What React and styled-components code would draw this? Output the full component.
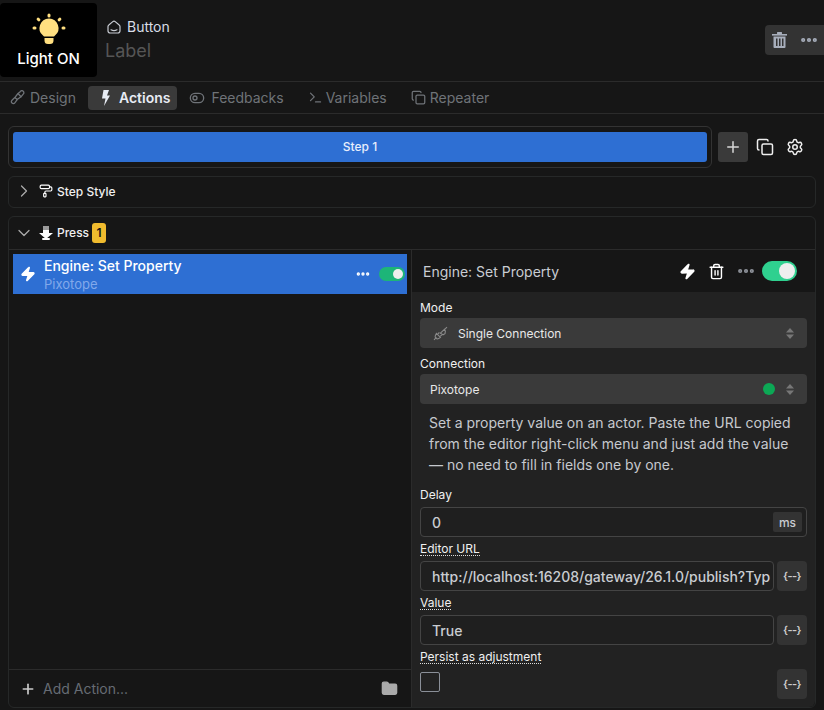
import styled, { createGlobalStyle } from 'styled-components';
import {
  ChevronDown,
  ChevronRight,
  Copy,
  Ellipsis,
  Folder,
  PaintRoller,
  Plus,
  Settings,
  Terminal,
  ToggleLeft,
  Trash2,
  Zap,
} from 'lucide-react';

const GlobalStyle = createGlobalStyle`
  html, body {
    margin: 0;
    background: #161616;
  }
  * {
    box-sizing: border-box;
  }
`;

const Page = styled.div`
  width: 824px;
  height: 710px;
  overflow: hidden;
  background: #161616;
  color: #e8e8e8;
  font-family: Inter, 'Liberation Sans', sans-serif;
  font-size: 12px;
`;

const Header = styled.div`
  height: 82px;
  padding-top: 3px;
  display: flex;
  border-bottom: 1px solid #2b2b2b;
`;

const Preview = styled.div`
  width: 97px;
  height: 74px;
  background: #000;
  border-radius: 4px;
  display: flex;
  flex-direction: column;
  align-items: center;
  padding-top: 10px;
  color: #fff;
  font-size: 15px;
  font-weight: 500;
  gap: 4px;
`;

const HeaderInfo = styled.div`
  flex: 1;
  padding: 15px 0 0 8px;
`;

const KindRow = styled.div`
  display: flex;
  align-items: center;
  gap: 6px;
  padding-left: 2px;
  font-size: 14px;
  line-height: 18px;
  color: #d8dde6;
`;

const LabelText = styled.div`
  font-size: 18px;
  line-height: 24px;
  margin-top: 3px;
  color: #555;
`;

const HeaderActions = styled.div`
  width: 59px;
  height: 30px;
  margin-top: 22px;
  background: #333;
  border-radius: 4px 0 0 4px;
  display: flex;
  align-items: center;
  justify-content: space-between;
  padding: 0 5px 0 7px;
  color: #a7aebb;
`;

const Tabs = styled.div`
  height: 32px;
  display: flex;
  align-items: center;
  padding-left: 3px;
  gap: 5px;
  border-bottom: 1px solid #2b2b2b;
`;

const Tab = styled.div`
  height: 24px;
  padding: 0 7px 0 ${(p) => p.$pad || 7}px;
  display: flex;
  align-items: center;
  gap: ${(p) => p.$gap || 5}px;
  border-radius: 4px;
  font-size: 14px;
  font-weight: ${(p) => (p.$active ? 600 : 400)};
  color: ${(p) => (p.$active ? '#e8ecf4' : '#6f7378')};
  background: ${(p) => (p.$active ? '#3a3a3a' : 'transparent')};
`;

const Body = styled.div`
  padding: 12px 8px 0 8px;
  display: flex;
  flex-direction: column;
`;

const StepRow = styled.div`
  display: flex;
  align-items: center;
`;

const StepFrame = styled.div`
  width: 704px;
  height: 42px;
  padding: 5px 4px;
  border: 1px solid #333;
  border-radius: 6px;
`;

const StepButton = styled.div`
  height: 30px;
  padding-bottom: 1px;
  background: #2e6fd3;
  border-radius: 3px;
  display: flex;
  align-items: center;
  justify-content: center;
  font-size: 12px;
  font-weight: 500;
  color: #e8eefc;
`;

const AddStep = styled.div`
  width: 30px;
  height: 30px;
  margin-left: 6px;
  background: #3a3a3a;
  border-radius: 3px;
  display: flex;
  align-items: center;
  justify-content: center;
  color: #d8d8d8;
`;

const StepIcon = styled.div`
  width: 18px;
  height: 18px;
  margin-left: ${(p) => p.$gap}px;
  display: flex;
  color: #eee;
`;

const Section = styled.div`
  margin-top: 8px;
  border: 1px solid #262828;
  border-radius: 6px;
  ${(p) => p.$grow && 'height: 492px; display: flex; flex-direction: column;'}
`;

const SectionHead = styled.div`
  height: ${(p) => p.$height}px;
  display: flex;
  align-items: center;
  padding: 0 0 ${(p) => p.$bottom}px 5px;
  font-size: 12px;
  font-weight: 500;
  color: #f0f0f0;
  flex-shrink: 0;
  ${(p) => p.$line && 'border-bottom: 1px solid #2b2b2b;'}
`;

const Chevron = styled.div`
  width: 20px;
  height: 20px;
  margin-right: 5px;
  display: flex;
  color: #aaa;
`;

const HeadIcon = styled.div`
  width: 14px;
  height: 14px;
  margin-right: 4px;
  display: flex;
  color: #fff;
`;

const Badge = styled.span`
  width: 14px;
  height: 20px;
  margin-left: 3px;
  background: #f0bb2e;
  border-radius: 3px;
  color: #161616;
  font-weight: 600;
  display: flex;
  align-items: center;
  justify-content: center;
`;

const Split = styled.div`
  flex: 1;
  min-height: 0;
  display: flex;
`;

const LeftPane = styled.div`
  width: 403px;
  flex-shrink: 0;
  display: flex;
  flex-direction: column;
  border-right: 1px solid #2b2b2b;
`;

const ActionList = styled.div`
  flex: 1;
  padding: 4px 4px 0;
`;

const ActionRow = styled.div`
  height: 40px;
  background: #2e6fd3;
  display: flex;
  align-items: center;
  padding: 0 2px 0 7px;
`;

const ActionText = styled.div`
  flex: 1;
  margin-left: 8px;
  padding-top: 2px;
`;

const ActionTitle = styled.div`
  font-size: 14px;
  line-height: 16px;
  font-weight: 500;
  color: #fff;
`;

const ActionSub = styled.div`
  margin-top: 2px;
  font-size: 13px;
  line-height: 16px;
  color: #82a9ea;
`;

const Dots = styled.div`
  display: flex;
  width: 16px;
  height: 16px;
  margin-right: 8px;
  color: #fff;
`;

const Toggle = styled.div`
  width: ${(p) => p.$w}px;
  height: ${(p) => p.$h}px;
  padding: 2px;
  display: flex;
  justify-content: flex-end;
  border-radius: 999px;
  background: ${(p) => p.$bg};
`;

const Knob = styled.div`
  height: 100%;
  aspect-ratio: 1;
  border-radius: 50%;
  background: #eee;
`;

const AddAction = styled.div`
  height: 38px;
  display: flex;
  align-items: center;
  padding: 0 13px 0 11px;
  gap: 7px;
  border-top: 1px solid #2b2b2b;
  font-size: 14px;
  color: #666c74;
`;

const AddLabel = styled.span`
  flex: 1;
`;

const RightPane = styled.div`
  flex: 1;
  min-width: 0;
  display: flex;
  flex-direction: column;
  background: #222;
  border-radius: 0 0 6px 0;
`;

const PaneHead = styled.div`
  height: 42px;
  background: #161616;
  display: flex;
  align-items: center;
  padding: 0 18px 0 11px;
  flex-shrink: 0;
`;

const PaneTitle = styled.div`
  flex: 1;
  font-size: 14px;
  color: #c9cdd3;
`;

const PaneIcon = styled.div`
  display: flex;
  margin-right: ${(p) => p.$right}px;
  color: ${(p) => p.$color || '#fff'};
`;

const Form = styled.div`
  padding: 8px 8px 0;
  display: flex;
  flex-direction: column;
`;

const FieldLabel = styled.div`
  font-size: 12px;
  line-height: 15px;
  height: ${(p) => p.$height || 16}px;
  color: #f0f0f0;
  ${(p) => p.$top && `margin-top: ${p.$top}px;`}
`;

const DottedLabel = styled.div`
  margin-top: 5px;
  height: 19px;
  font-size: 12px;
  line-height: 13px;
  color: #f0f0f0;
  span {
    display: inline-block;
    border-bottom: 1px dotted #ddd;
  }
`;

const Select = styled.div`
  height: 30px;
  margin-top: 2px;
  background: #3a3a3a;
  border-radius: 4px;
  display: flex;
  align-items: center;
  padding: 0 13px 0 ${(p) => p.$pad}px;
  font-size: 12px;
  color: #e8e8e8;
`;

const SelectText = styled.span`
  flex: 1;
  margin-left: ${(p) => p.$left || 0}px;
`;

const StatusDot = styled.span`
  width: 12px;
  height: 12px;
  margin-right: 11px;
  border-radius: 50%;
  background: #0ca855;
`;

const Help = styled.p`
  margin: 8px 0 0;
  padding: 0 8px 0 9px;
  font-size: 14px;
  line-height: 21px;
  color: #c6c9ce;
`;

const InputRow = styled.div`
  display: flex;
  gap: 3px;
`;

const Input = styled.div`
  flex: 1;
  min-width: 0;
  height: 30px;
  border: 1px solid #444;
  border-radius: 4px;
  background: #1f1f1f;
  display: flex;
  align-items: center;
  padding: 0 4px 0 11px;
  font-size: 14px;
  font-weight: 500;
  color: #c9ccd1;
  white-space: nowrap;
`;

const InputValue = styled.span`
  flex: 1;
`;

const Unit = styled.span`
  width: 29px;
  height: 20px;
  background: #333;
  border-radius: 2px;
  display: flex;
  align-items: center;
  justify-content: center;
  font-size: 12px;
  color: #c9ccd1;
`;

const VarButton = styled.div`
  width: 30px;
  height: 30px;
  background: #333;
  border-radius: 4px;
  display: flex;
  align-items: center;
  justify-content: center;
  font-size: 11px;
  font-weight: 600;
  letter-spacing: -0.5px;
  color: #ccc;
`;

const CheckRow = styled.div`
  display: flex;
  justify-content: space-between;
  align-items: flex-start;
`;

const Checkbox = styled.div`
  width: 20px;
  height: 20px;
  margin-top: 3px;
  border: 1px solid #8a8f98;
  border-radius: 2px;
`;

const Bulb = () => (
  <svg width="34" height="32" viewBox="0 0 34 32" fill="#ffdf80">
    <path d="M17 5.5a9.6 9.6 0 0 1 6 17l-1 1H12l-1-1a9.6 9.6 0 0 1 6-17z" />
    <path d="M12.5 25h9v2.5a3.5 3.5 0 0 1-3.5 3.5h-2a3.5 3.5 0 0 1-3.5-3.5z" />
    <rect x="15.5" y="0.5" width="3" height="4" rx="1.5" />
    <rect x="0.5" y="13.5" width="4" height="3" rx="1.5" />
    <rect x="29.5" y="13.5" width="4" height="3" rx="1.5" />
    <rect x="4.5" y="5" width="4" height="3" rx="1.5" transform="rotate(40 6.5 6.5)" />
    <rect x="25.5" y="5" width="4" height="3" rx="1.5" transform="rotate(-40 27.5 6.5)" />
  </svg>
);

const ButtonIcon = () => (
  <svg width="14" height="14" viewBox="0 0 14 14" fill="none" stroke="#c8ccd3" strokeWidth="1.2">
    <path d="M1 6.5C1 5.8 1.3 5.4 1.8 5L5.8 1.6c.7-.6 1.7-.6 2.4 0L12.2 5c.5.4.8.8.8 1.5v4.3A2.2 2.2 0 0 1 10.8 13H3.2A2.2 2.2 0 0 1 1 10.8z" />
    <path d="M4 9.8c1.5.8 4.5.8 6 0" strokeLinecap="round" />
  </svg>
);

const BrushIcon = () => (
  <svg width="15" height="15" viewBox="0 0 15 15" fill="none" stroke="#6f7378" strokeWidth="1.3">
    <path d="M8 3.5 10.5 1.4a1.9 1.9 0 0 1 2.9 2.5L11 6.8z" strokeLinejoin="round" />
    <path d="M8 3.5 4.8 7.6l2.4 2L11 6.8" strokeLinejoin="round" />
    <path d="M4.8 7.6 2 10.2c-.9.9-.9 2.1 0 2.9s2 .7 2.8-.2l2.4-3.3" strokeLinejoin="round" />
  </svg>
);

const TabBolt = () => (
  <svg width="15" height="16" viewBox="0 0 15 16" fill="#e8ecf4">
    <path d="M7.5 0h5.5l-2 5.5h3L8 16l1.5-7.5H6z" />
  </svg>
);

const PressIcon = () => (
  <svg width="14" height="14" viewBox="0 0 14 14">
    <rect x="4" y="0" width="6" height="4" fill="#9a9a9a" />
    <path d="M4 4h6v3h4l-7 6-7-6h4z" fill="#fff" />
    <rect x="3" y="12" width="8" height="2" rx="1" fill="#fff" />
  </svg>
);

const SortArrows = () => (
  <svg width="8" height="11" viewBox="0 0 8 11" fill="#777">
    <path d="M4 0 8 4.5H0z" />
    <path d="M4 11 0 6.5h8z" />
  </svg>
);

const PlugIcon = () => (
  <svg width="15" height="15" viewBox="0 0 15 15" fill="none" stroke="#8a8a8a" strokeWidth="1.1">
    <path d="M1 13.8 3.4 11.4M11.4 3.6 14 1.2" />
    <path d="M3.4 7.4 7.4 11.4l-1.8 1.2a2.4 2.4 0 0 1-3.2-3.2z" />
    <path d="M7.4 7.2 11.4 3.4l1 1.8-.4 2.4-2 1.2z" />
    <path d="m6.4 6.4-1.6 1.6M8.8 8.8 7.2 10.4" />
  </svg>
);

const TrashSolid = () => (
  <svg width="15" height="16" viewBox="0 0 15 16" fill="#a7aebb">
    <rect x="0" y="2" width="15" height="1.6" />
    <rect x="5" y="0" width="5" height="2" rx="0.5" />
    <path d="M1.5 4.5h12V15a1 1 0 0 1-1 1h-10a1 1 0 0 1-1-1zM4 6.5V14h1.5V6.5zm3 0V14h1.5V6.5zm3 0V14h1.5V6.5z" fillRule="evenodd" />
  </svg>
);

const App = () => (
  <Page>
    <GlobalStyle />
    <Header>
      <Preview>
        <Bulb />
        <span>Light ON</span>
      </Preview>
      <HeaderInfo>
        <KindRow>
          <ButtonIcon />
          Button
        </KindRow>
        <LabelText>Label</LabelText>
      </HeaderInfo>
      <HeaderActions>
        <TrashSolid />
        <Ellipsis size={20} strokeWidth={3} />
      </HeaderActions>
    </Header>

    <Tabs>
      <Tab>
        <BrushIcon />
        Design
      </Tab>
      <Tab $active $pad={8} $gap={8}>
        <TabBolt />
        Actions
      </Tab>
      <Tab $gap={6}>
        <ToggleLeft size={16} />
        Feedbacks
      </Tab>
      <Tab $pad={12} $gap={3}>
        <Terminal size={15} />
        Variables
      </Tab>
      <Tab $pad={12} $gap={4}>
        <Copy size={15} />
        Repeater
      </Tab>
    </Tabs>

    <Body>
      <StepRow>
        <StepFrame>
          <StepButton>Step 1</StepButton>
        </StepFrame>
        <AddStep>
          <Plus size={18} />
        </AddStep>
        <StepIcon $gap={8}>
          <Copy size={18} strokeWidth={2} />
        </StepIcon>
        <StepIcon $gap={12}>
          <Settings size={18} strokeWidth={2} />
        </StepIcon>
      </StepRow>

      <Section>
        <SectionHead $height={30} $bottom={2}>
          <Chevron>
            <ChevronRight size={20} strokeWidth={1.5} />
          </Chevron>
          <HeadIcon>
            <PaintRoller size={14} />
          </HeadIcon>
          Step Style
        </SectionHead>
      </Section>

      <Section $grow>
        <SectionHead $height={33} $bottom={1} $line>
          <Chevron>
            <ChevronDown size={20} strokeWidth={1.5} />
          </Chevron>
          <HeadIcon>
            <PressIcon />
          </HeadIcon>
          Press
          <Badge>1</Badge>
        </SectionHead>
        <Split>
          <LeftPane>
            <ActionList>
              <ActionRow>
                <Zap size={16} fill="#fff" color="#fff" />
                <ActionText>
                  <ActionTitle>Engine: Set Property</ActionTitle>
                  <ActionSub>Pixotope</ActionSub>
                </ActionText>
                <Dots>
                  <Ellipsis size={16} strokeWidth={3} />
                </Dots>
                <Toggle $w={26} $h={14} $bg="#1db578">
                  <Knob />
                </Toggle>
              </ActionRow>
            </ActionList>
            <AddAction>
              <Plus size={16} color="#ccc" strokeWidth={2.5} />
              <AddLabel>Add Action...</AddLabel>
              <Folder size={17} fill="#aaa" color="#aaa" />
            </AddAction>
          </LeftPane>

          <RightPane>
            <PaneHead>
              <PaneTitle>Engine: Set Property</PaneTitle>
              <PaneIcon $right={12}>
                <Zap size={17} fill="#fff" />
              </PaneIcon>
              <PaneIcon $right={11}>
                <Trash2 size={17} />
              </PaneIcon>
              <PaneIcon $right={6} $color="#8f939b">
                <Ellipsis size={20} strokeWidth={3} />
              </PaneIcon>
              <Toggle $w={35} $h={20} $bg="#2fd08f">
                <Knob />
              </Toggle>
            </PaneHead>
            <Form>
              <FieldLabel>Mode</FieldLabel>
              <Select $pad={13}>
                <PlugIcon />
                <SelectText $left={10}>Single Connection</SelectText>
                <SortArrows />
              </Select>
              <FieldLabel $top={8}>Connection</FieldLabel>
              <Select $pad={10}>
                <SelectText>Pixotope</SelectText>
                <StatusDot />
                <SortArrows />
              </Select>
              <Help>
                Set a property value on an actor. Paste the URL copied from the editor
                right-click menu and just add the value — no need to fill in fields one
                by one.
              </Help>
              <FieldLabel $top={12} $height={20}>Delay</FieldLabel>
              <InputRow>
                <Input>
                  <InputValue>0</InputValue>
                  <Unit>ms</Unit>
                </Input>
              </InputRow>
              <DottedLabel>
                <span>Editor URL</span>
              </DottedLabel>
              <InputRow>
                <Input>
                  <InputValue>http://localhost:16208/gateway/26.1.0/publish?Typ</InputValue>
                </Input>
                <VarButton>{'{--}'}</VarButton>
              </InputRow>
              <DottedLabel>
                <span>Value</span>
              </DottedLabel>
              <InputRow>
                <Input>
                  <InputValue>True</InputValue>
                </Input>
                <VarButton>{'{--}'}</VarButton>
              </InputRow>
              <DottedLabel>
                <span>Persist as adjustment</span>
              </DottedLabel>
              <CheckRow>
                <Checkbox />
                <VarButton>{'{--}'}</VarButton>
              </CheckRow>
            </Form>
          </RightPane>
        </Split>
      </Section>
    </Body>
  </Page>
);

export default App;
